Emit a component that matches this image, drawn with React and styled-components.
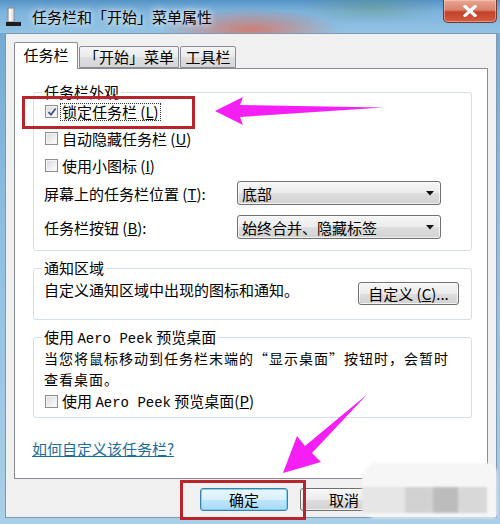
import styled, { createGlobalStyle } from 'styled-components';

const GlobalStyle = createGlobalStyle`
  html, body { margin: 0; padding: 0; background: #ffffff; }
  body { font-family: "Noto Sans CJK SC", "DejaVu Sans", sans-serif; color: #000; }
`;

const Window = styled.div`
  position: relative;
  width: 500px;
  height: 524px;
  overflow: hidden;
  display: flex;
  flex-direction: column;
  background: linear-gradient(180deg, #6fa6d2 0%, #8fc0e2 45%, #aacfe8 100%);
`;

const TitleBar = styled.div`
  height: 33px;
  flex: none;
  display: flex;
  align-items: center;
  padding-left: 6px;
  background:
    radial-gradient(ellipse 90px 22px at 250px 30px, rgba(222, 110, 90, 0.8), rgba(222, 110, 90, 0) 100%),
    radial-gradient(ellipse 70px 16px at 370px 8px, rgba(90, 140, 80, 0.3), rgba(90, 140, 80, 0) 100%),
    linear-gradient(180deg, #5593c6 0%, #7db3dc 35%, #93c3e4 100%);
`;

const TitleText = styled.span`
  margin-left: 10px;
  font-size: 15px;
  line-height: 18px;
  text-shadow: 0 0 6px rgba(255, 255, 255, 0.95), 0 0 10px rgba(255, 255, 255, 0.7);
`;

const CloseButton = styled.div`
  align-self: flex-start;
  margin-left: auto;
  margin-right: 3px;
  width: 54px;
  height: 23px;
  box-sizing: border-box;
  border: 1px solid #6b3a33;
  border-top: none;
  border-radius: 0 0 5px 5px;
  background: linear-gradient(180deg, #e9a592 0%, #d9836c 45%, #c4402a 55%, #d45d3e 100%);
  box-shadow: inset 0 0 0 1px rgba(255, 220, 210, 0.45);
  display: flex;
  align-items: center;
  justify-content: center;
`;

const Client = styled.div`
  flex: 1;
  margin: 0 3px 6px 5px;
  background: #f0f0f0;
  border: 1px solid #7f98b1;
  display: flex;
  flex-direction: column;
  padding-top: 8px;
`;

const TabRow = styled.div`
  display: flex;
  align-items: flex-end;
  padding-left: 8px;
  position: relative;
  z-index: 1;
`;

const Tab = styled.div`
  box-sizing: border-box;
  width: ${({ w }) => w}px;
  height: ${({ active }) => (active ? 27 : 22)}px;
  margin-bottom: ${({ active }) => (active ? -1 : 0)}px;
  margin-left: ${({ first }) => (first ? 0 : 1)}px;
  border: 1px solid #898c95;
  border-bottom: ${({ active }) => (active ? 'none' : '1px solid #898c95')};
  border-radius: 2px 2px 0 0;
  background: ${({ active }) =>
    active ? '#ffffff' : 'linear-gradient(180deg, #f4f4f4 0%, #ebebeb 50%, #dfdfdf 51%, #d6d6d6 100%)'};
  font-size: 15px;
  line-height: ${({ active }) => (active ? 24 : 20)}px;
  text-align: center;
`;

const Panel = styled.div`
  box-sizing: border-box;
  height: 411px;
  margin: 0 8px 0 8px;
  background: #ffffff;
  border: 1px solid #898c95;
  padding: 0 15px 0 18px;
  display: flex;
  flex-direction: column;
`;

const Group = styled.div`
  margin-top: ${({ top }) => top}px;
  border: 1px solid #d5dfe5;
  border-radius: 3px;
  padding: 0 10px ${({ bottom }) => bottom}px 10px;
  display: flex;
  flex-direction: column;
`;

const Legend = styled.div`
  align-self: flex-start;
  margin: -10px 0 ${({ after }) => after}px -2px;
  padding: 0 2px;
  background: #ffffff;
  font-size: 15px;
  line-height: 18px;
`;

const CheckRow = styled.div`
  height: ${({ h }) => h}px;
  margin-top: ${({ mt }) => mt || 0}px;
  display: flex;
  align-items: center;
  font-size: 15px;
`;

const Box = styled.span`
  box-sizing: border-box;
  width: 13px;
  height: 13px;
  margin-left: 1px;
  margin-right: 3px;
  border: 1px solid #8f8f8f;
  background: linear-gradient(135deg, #d8d8d8 0%, #f4f4f4 70%, #ffffff 100%);
  box-shadow: inset 0 0 0 1px #f4f4f4;
  display: flex;
  align-items: center;
  justify-content: center;
`;

const Label = styled.span`
  line-height: 16px;
  padding: 0 1px;
  outline: ${({ focused }) => (focused ? '1px dotted #333' : 'none')};
`;

const Key = styled.span`
  text-decoration: underline;
`;

const SelectRow = styled.div`
  height: ${({ h }) => h}px;
  display: flex;
  align-items: center;
  font-size: 15px;
`;

const SelectLabel = styled.span`
  width: 193px;
  flex: none;
`;

const Select = styled.div`
  box-sizing: border-box;
  width: 204px;
  height: 24px;
  border: 1px solid #707070;
  border-radius: 3px;
  background: linear-gradient(180deg, #f6f6f6 0%, #ececec 50%, #dedede 51%, #d2d2d2 100%);
  box-shadow: inset 0 0 0 1px rgba(255, 255, 255, 0.7);
  display: flex;
  align-items: center;
  justify-content: space-between;
  padding: 0 6px 0 4px;
  font-size: 15px;
`;

const NotifyRow = styled.div`
  margin-top: 4px;
  display: flex;
  justify-content: space-between;
  align-items: flex-start;
  font-size: 15px;
`;

const Text = styled.div`
  font-size: 15px;
  line-height: 18px;
`;

const Paragraph = styled.div`
  font-size: 14px;
  letter-spacing: 1px;
  line-height: 21px;
`;

const Mono = styled.span`
  font-family: "Liberation Mono", "DejaVu Sans Mono", monospace;
  font-size: 14px;
  letter-spacing: 0;
`;

const Button = styled.div`
  box-sizing: border-box;
  width: ${({ w }) => w}px;
  height: 23px;
  margin-top: ${({ mt }) => mt || 0}px;
  margin-right: ${({ mr }) => mr || 0}px;
  border: 1px solid ${({ primary }) => (primary ? '#3c7fb1' : '#707070')};
  border-radius: 3px;
  background: ${({ primary }) =>
    primary
      ? 'linear-gradient(180deg, #eaf6fd 0%, #d9f0fc 50%, #bee6fd 51%, #a7d9f5 100%)'
      : 'linear-gradient(180deg, #f6f6f6 0%, #ececec 50%, #dedede 51%, #d2d2d2 100%)'};
  box-shadow: inset 0 0 0 1px ${({ primary }) => (primary ? 'rgba(110, 200, 245, 0.8)' : 'rgba(255, 255, 255, 0.7)')};
  display: flex;
  align-items: center;
  justify-content: center;
  font-size: 15px;
  flex: none;
`;

const Link = styled.div`
  margin: 22px 0 0 -1px;
  font-size: 15px;
  line-height: 18px;
  color: #1c6d9c;
  text-decoration: underline;
`;

const Footer = styled.div`
  display: flex;
  justify-content: flex-end;
  padding: 9px 8px 0 0;
  gap: 12px;
`;

const Watermark = styled.div`
  position: absolute;
  left: 362px;
  top: 463px;
  width: 135px;
  height: 55px;
  border-radius: 16px 10px 4px 14px;
  background: #f6f6f6;
  display: flex;
  align-items: flex-end;
  padding-bottom: 5px;
  box-sizing: border-box;
  filter: blur(1px);
`;

const Block = styled.div`
  width: ${({ w }) => w}px;
  height: 26px;
  background: ${({ c }) => c};
`;

const Overlay = styled.svg`
  position: absolute;
  top: 0;
  left: 0;
  pointer-events: none;
`;

const Check = () => (
  <svg width="10" height="10" viewBox="0 0 10 10">
    <path d="M1.5 5.2 L4 7.8 L8.6 1.6" fill="none" stroke="#3b4f8c" strokeWidth="1.7" />
  </svg>
);

const Arrow = () => (
  <svg width="8" height="5" viewBox="0 0 8 5">
    <path d="M0 0 H8 L4 4.5 Z" fill="#111" />
  </svg>
);

const CheckItem = ({ checked, focused, children, h, mt }) => (
  <CheckRow h={h} mt={mt}>
    <Box>{checked && <Check />}</Box>
    <Label focused={focused}>{children}</Label>
  </CheckRow>
);

export default function App() {
  return (
    <>
      <GlobalStyle />
      <Window>
        <TitleBar>
          <svg width="16" height="20" viewBox="0 0 16 20">
            <rect x="2" y="1" width="6" height="14" fill="#e8e8e8" stroke="#8c8c8c" />
            <rect x="3" y="2" width="2" height="12" fill="#ffffff" />
            <rect x="0" y="15" width="15" height="4" fill="#1d1d1d" />
          </svg>
          <TitleText>任务栏和「开始」菜单属性</TitleText>
          <CloseButton>
            <svg width="16" height="12" viewBox="0 0 16 12">
              <path d="M3 1.5 L13 10.5 M13 1.5 L3 10.5" stroke="#ffffff" strokeWidth="3.2" strokeLinecap="square" />
            </svg>
          </CloseButton>
        </TitleBar>

        <Client>
          <TabRow>
            <Tab first active w={64}>任务栏</Tab>
            <Tab w={100}>「开始」菜单</Tab>
            <Tab w={56}>工具栏</Tab>
          </TabRow>

          <Panel>
            <Group top={23} bottom={3}>
              <Legend after={-3}>任务栏外观</Legend>
              <CheckItem h={27} checked focused>
                锁定任务栏 (<Key>L</Key>)
              </CheckItem>
              <CheckItem h={27}>
                自动隐藏任务栏 (<Key>U</Key>)
              </CheckItem>
              <CheckItem h={27}>
                使用小图标 (<Key>I</Key>)
              </CheckItem>
              <SelectRow h={28}>
                <SelectLabel>
                  屏幕上的任务栏位置 (<Key>T</Key>):
                </SelectLabel>
                <Select>
                  <span>底部</span>
                  <Arrow />
                </Select>
              </SelectRow>
              <SelectRow h={40}>
                <SelectLabel>
                  任务栏按钮 (<Key>B</Key>):
                </SelectLabel>
                <Select>
                  <span>始终合并、隐藏标签</span>
                  <Arrow />
                </Select>
              </SelectRow>
            </Group>

            <Group top={17} bottom={14}>
              <Legend after={0}>通知区域</Legend>
              <NotifyRow>
                <Text>自定义通知区域中出现的图标和通知。</Text>
                <Button w={101} mt={1} mr={2}>
                  自定义 (<Key>C</Key>)...
                </Button>
              </NotifyRow>
            </Group>

            <Group top={17} bottom={2}>
              <Legend after={0}>
                使用 <Mono>Aero Peek</Mono> 预览桌面
              </Legend>
              <Paragraph>
                当您将鼠标移动到任务栏末端的“显示桌面”按钮时，会暂时
                <br />
                查看桌面。
              </Paragraph>
              <CheckItem h={27} mt={-2}>
                使用 <Mono>Aero Peek</Mono> 预览桌面(<Key>P</Key>)
              </CheckItem>
            </Group>

            <Link>如何自定义该任务栏?</Link>
          </Panel>

          <Footer>
            <Button primary w={88}>确定</Button>
            <Button w={88}>取消</Button>
            <Button w={88}>应用 (A)</Button>
          </Footer>
        </Client>

        <Watermark>
          <Block w={43} c="#e6e6e6" />
          <Block w={28} c="#d2d2d2" />
          <Block w={25} c="#bcbcbc" />
          <Block w={29} c="#d8d8d8" />
        </Watermark>

        <Overlay width="500" height="524" viewBox="0 0 500 524">
          <rect x="23.5" y="97.5" width="170" height="30" fill="none" stroke="#b8242b" strokeWidth="3" />
          <rect x="181.5" y="481.5" width="123" height="37" fill="none" stroke="#b8242b" strokeWidth="3" />
          <path d="M215 111 L243 97 L240 105 L383 107.5 L240 117 L243 125 Z" fill="#f51ef5" />
          <path d="M283 473 L297 436 L305 446 L367 394.5 L312 453 L321 462 Z" fill="#f51ef5" />
        </Overlay>
      </Window>
    </>
  );
}
